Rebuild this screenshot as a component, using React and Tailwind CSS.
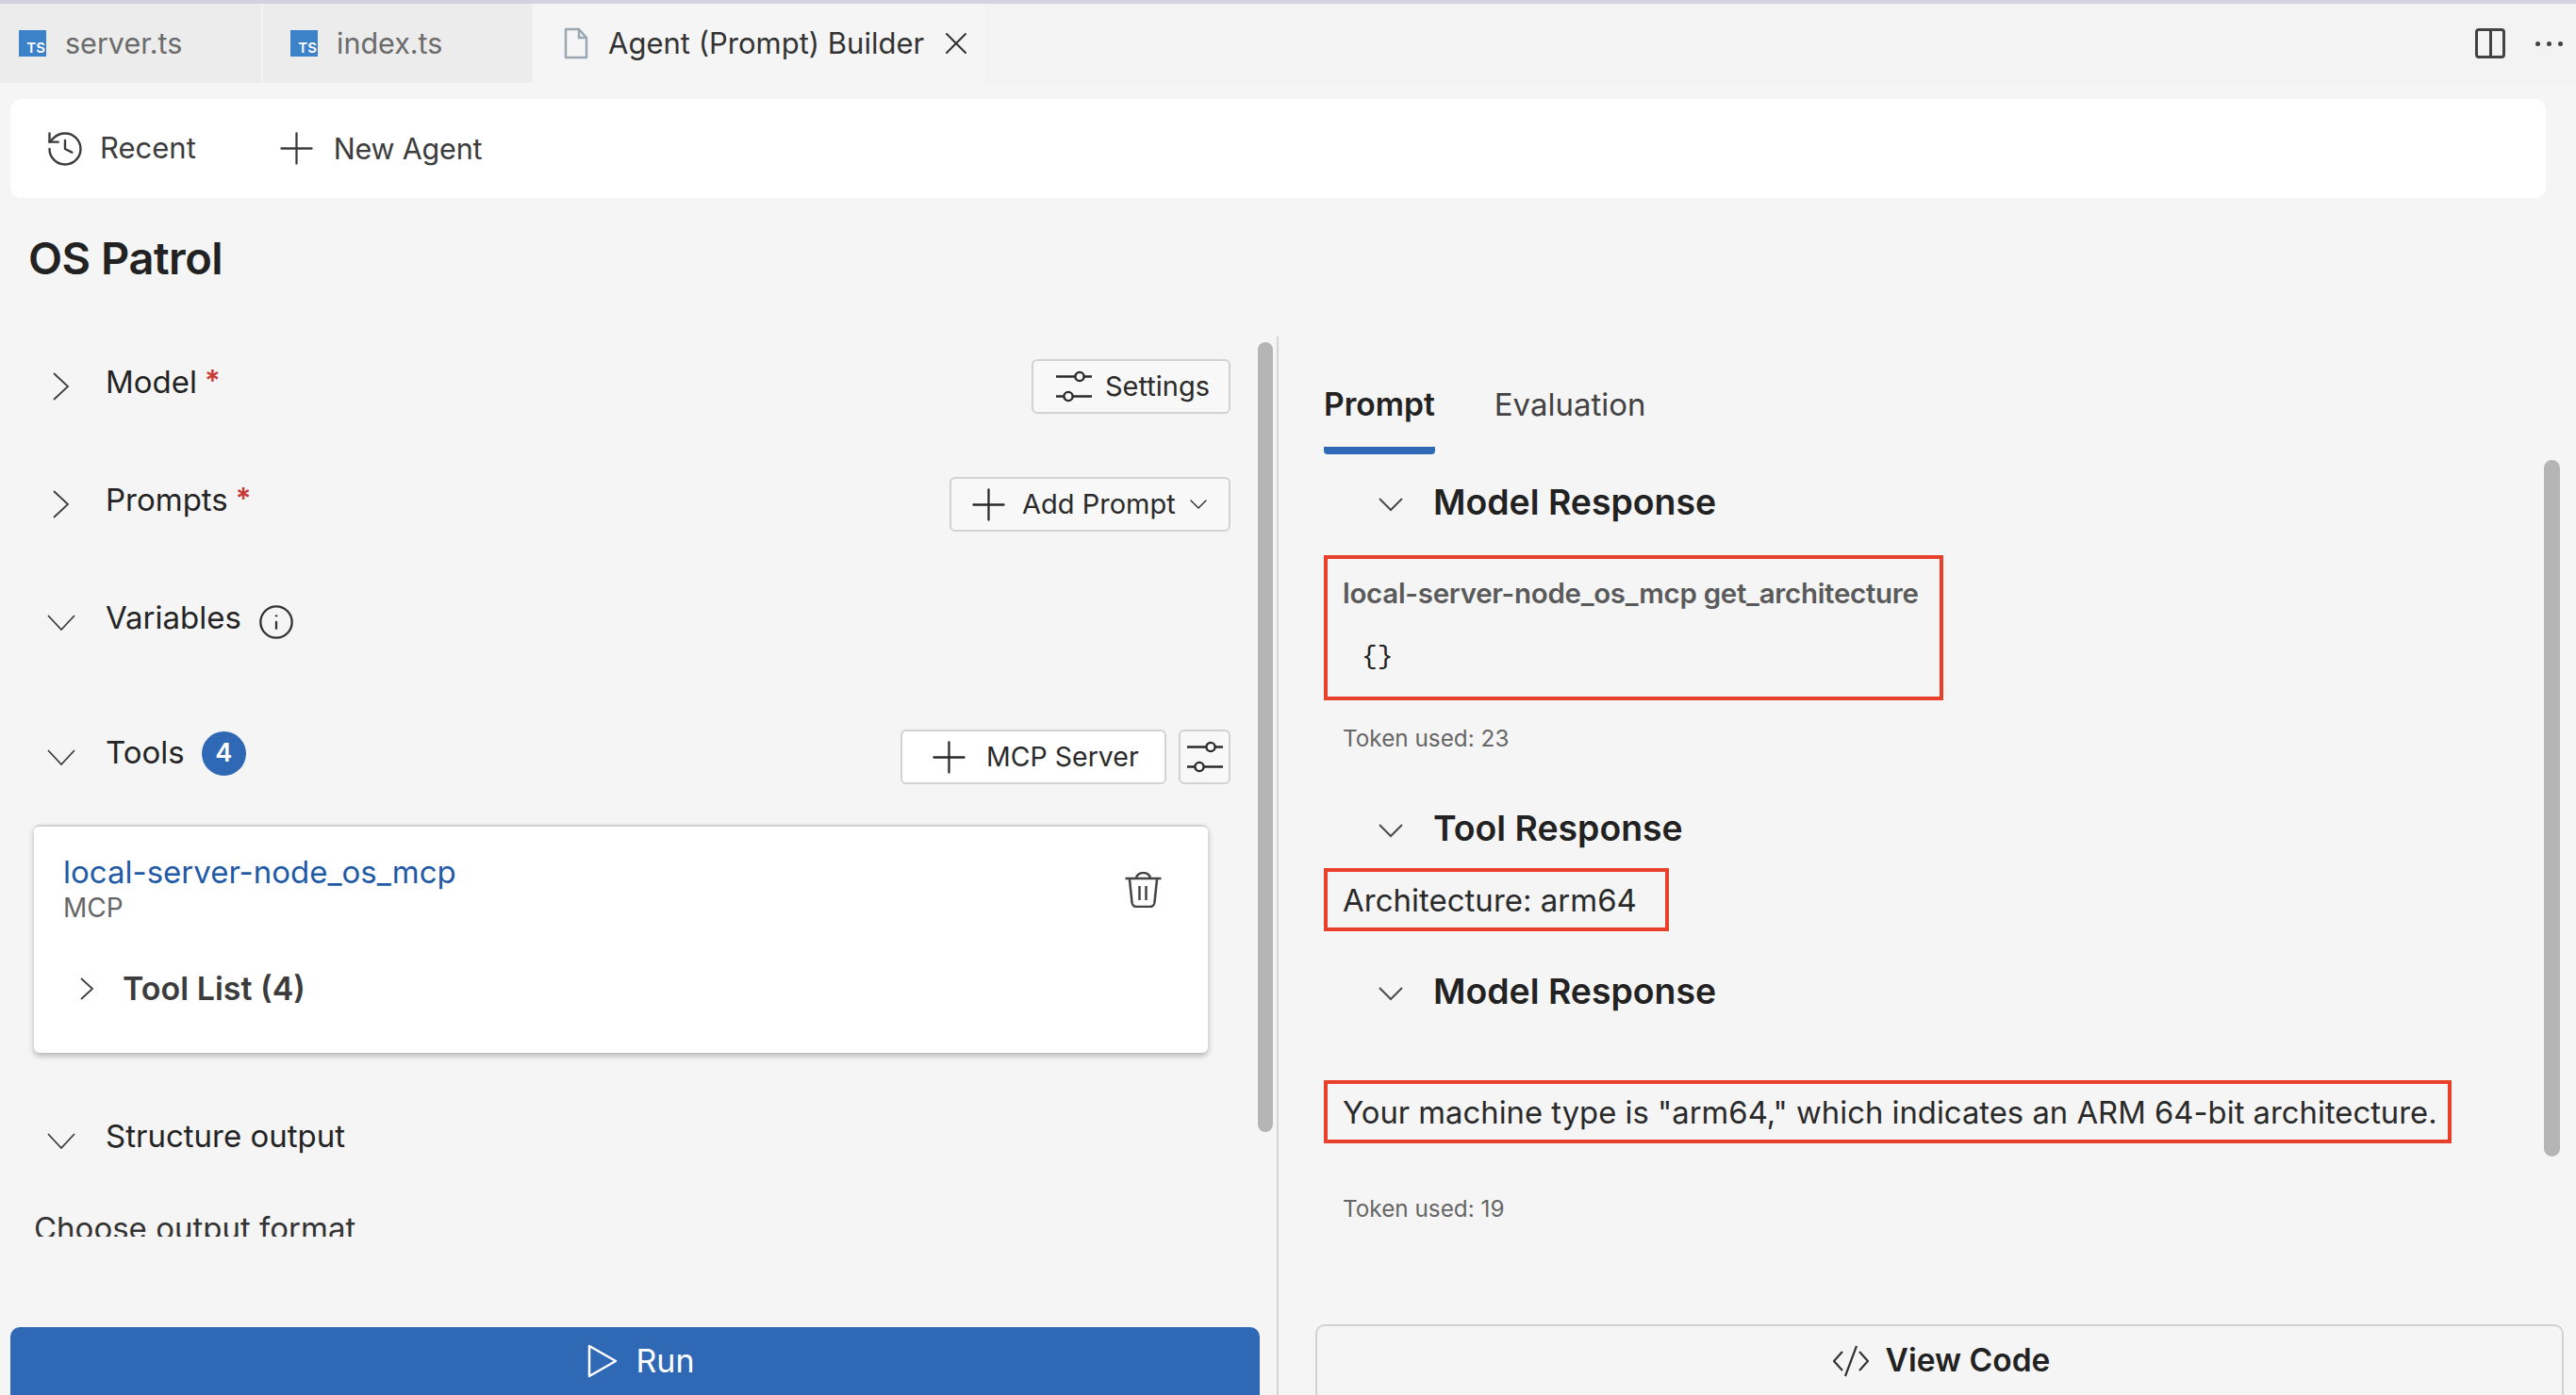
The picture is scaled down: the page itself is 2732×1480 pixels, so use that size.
import React from 'react';
import { History, Plus, X, ChevronDown, Info } from 'lucide-react';

const SlidersIcon = () => (
  <svg width="38" height="40" viewBox="0 0 38 40" fill="none" stroke="#2a2a2a" strokeWidth="2.4" className="shrink-0">
    <path d="M0 9.5h20M30 9.5h8" />
    <circle cx="25" cy="9.5" r="4.6" />
    <path d="M0 30.5h8M18 30.5h20" />
    <circle cx="13" cy="30.5" r="4.6" />
  </svg>
);

const TsIcon = () => (
  <div className="w-[29px] h-[28px] bg-[#3b82c9] flex items-end justify-end pr-[1px] pb-[2px] text-white text-[15px] leading-none font-semibold">TS</div>
);

const FileIcon = () => (
  <svg width="26" height="34" viewBox="0 0 26 34" fill="none" stroke="#9aa7b3" strokeWidth="2.5" className="shrink-0">
    <path d="M2 2h14l8 9v21H2z" strokeLinejoin="round" />
    <path d="M16 2v9h8" />
  </svg>
);

const TrashIcon = () => (
  <svg width="39" height="38" viewBox="0 0 39 38" fill="none" stroke="#444" strokeWidth="2.5">
    <path d="M0.5 7h38" />
    <path d="M12 7a7.5 6 0 0 1 15 0" />
    <path d="M5 8l2.5 24a5 5 0 0 0 5 5h14a5 5 0 0 0 5-5L34 8" />
    <path d="M15.5 15v15M22.5 15v15" />
  </svg>
);

const Chevron = ({ open }) => (
  <svg width="30" height="30" viewBox="0 0 30 30" fill="none" stroke="#3c3c3c" strokeWidth="1.8">
    {open ? <path d="M1 8l14 15 14-15" /> : <path d="M7 1l15 14-15 14" />}
  </svg>
);

const Star = () => <span className="text-[#c73a35] text-[31px] font-semibold leading-none self-start ml-2 mt-[7px]">*</span>;

const OutlineBtn = ({ className, children }) => (
  <div className={`h-[58px] flex items-center bg-[#f8f8f8] border-2 border-[#d2d2d2] rounded-[6px] text-[29px] text-[#2a2a2a] ${className}`}>
    {children}
  </div>
);

const Section = ({ open, label, after, right, className }) => (
  <div className={`h-[58px] flex items-center pl-[50px] pr-[49px] ${className}`}>
    <div className="w-[62px]"><Chevron open={open} /></div>
    <span className="text-[33px] text-[#242424] -translate-y-1">{label}</span>
    {after}
    <div className="ml-auto flex gap-[13px]">{right}</div>
  </div>
);

const Heading = ({ label, className }) => (
  <div className={`flex items-center ml-[58px] ${className}`}>
    <svg width="26" height="26" viewBox="0 0 26 26" fill="none" stroke="#4a4a4a" strokeWidth="2"><path d="M1 7l12 12 12-12" /></svg>
    <span className="text-[37.4px] leading-[56px] font-semibold text-[#222] ml-[32px] -translate-y-[2px]">{label}</span>
  </div>
);

const App = () => {
  return (
    <div className="w-[2732px] h-[1480px] overflow-hidden flex flex-col bg-[#f5f5f5] relative font-['Inter',sans-serif]">
      <div className="h-1 bg-[#d6d0e0]" />
      <div className="h-[84px] flex items-stretch bg-[#f3f3f3] text-[30.5px]">
        <div className="w-[277px] bg-[#ececec] mr-[2px] flex items-center pl-[20px] gap-[20px] text-[#6b6b6b]"><TsIcon />server.ts</div>
        <div className="w-[286px] bg-[#ececec] flex items-center pl-[29px] gap-[20px] text-[#6b6b6b]"><TsIcon />index.ts</div>
        <div className="w-[480px] bg-[#f5f5f5] flex items-center pl-[33px] gap-[21px] text-[#333] text-[31px]">
          <FileIcon />
          Agent (Prompt) Builder
          <X size={40} strokeWidth={1.2} className="-ml-[7px]" />
        </div>
        <div className="ml-auto flex items-center pr-[14px] gap-[32px]">
          <div className="w-8 h-8 border-[3px] border-[#424242] rounded-[4px] flex justify-center"><div className="w-[3px] bg-[#424242]" /></div>
          <div className="flex gap-[7px]">
            <div className="w-[5px] h-[5px] rounded-full bg-[#424242]" />
            <div className="w-[5px] h-[5px] rounded-full bg-[#424242]" />
            <div className="w-[5px] h-[5px] rounded-full bg-[#424242]" />
          </div>
        </div>
      </div>

      <div className="mt-[17px] ml-[11px] mr-[32px] h-[105px] bg-white rounded-xl flex items-center pl-[36px] text-[31px] text-[#3c3c3c]">
        <History size={44} strokeWidth={1.3} />
        <span className="ml-[15px]">Recent</span>
        <Plus size={55} strokeWidth={1} className="ml-[79px]" />
        <span className="ml-[12px] text-[30.5px] tracking-[-0.2px]">New Agent</span>
      </div>

      <div className="h-[147px] flex items-start pl-[30px] pt-[40px]">
        <h1 className="text-[47px] font-semibold text-[#222] leading-[48px] tracking-[-0.5px]">OS Patrol</h1>
      </div>

      <div className="flex-1 min-h-0 flex">
        <div className="w-[1356px] border-r-2 border-[#d4d4d4] flex flex-col">
          <div className="h-[955px] overflow-hidden">
            <Section className="mt-[24px]" label="Model" after={<Star />} right={
              <OutlineBtn className="w-[211px] pl-[24px] gap-[14px]"><SlidersIcon />Settings</OutlineBtn>
            } />
            <Section className="mt-[67px]" label="Prompts" after={<Star />} right={
              <OutlineBtn className="w-[298px] pl-[12px] gap-[8px]">
                <Plus size={55} strokeWidth={1} className="shrink-0" />
                Add Prompt
                <ChevronDown size={32} strokeWidth={1} className="shrink-0" />
              </OutlineBtn>
            } />
            <Section className="mt-[67px]" open label="Variables" after={<Info size={40} strokeWidth={1.4} className="ml-[17px] text-[#333]" />} />
            <Section className="mt-[85px]" open label="Tools" after={
              <span className="ml-[18px] w-[47px] h-[47px] rounded-full bg-[#2f69b5] text-white font-semibold text-[27px] flex items-center justify-center -translate-y-1">4</span>
            } right={
              <>
                <div className="h-[58px] w-[282px] flex items-center pl-[22px] gap-[12px] bg-white border-2 border-[#d2d2d2] rounded-[6px] text-[28.5px] text-[#2a2a2a]">
                  <Plus size={55} strokeWidth={1} className="shrink-0" />MCP Server
                </div>
                <OutlineBtn className="w-[55px] justify-center"><SlidersIcon /></OutlineBtn>
              </>
            } />

            <div className="mt-[43px] ml-[36px] w-[1245px] h-[242px] bg-white border-t-2 border-[#d2d2d2] rounded-[6px] shadow-[0_3px_6px_rgba(0,0,0,0.28)] flex justify-between pl-[31px] pr-[49px] pt-[26px]">
              <div>
                <div className="text-[33px] leading-[44px] text-[#1f5aa6]">local-server-node_os_mcp</div>
                <div className="text-[28px] leading-[32px] text-[#666]">MCP</div>
                <div className="flex items-center mt-[45px] ml-[13px]">
                  <svg width="24" height="24" viewBox="0 0 24 24" fill="none" stroke="#3c3c3c" strokeWidth="1.8"><path d="M6 1l12 11-12 11" /></svg>
                  <span className="text-[34px] leading-[50px] font-semibold text-[#3c3c3c] ml-[26px]">Tool List (4)</span>
                </div>
              </div>
              <div className="pt-[22px]"><TrashIcon /></div>
            </div>

            <Section className="mt-[64px]" open label="Structure output" />
            <div className="mt-[42px] pl-[36px] text-[33px] leading-[44px] text-[#333]">Choose output format</div>
          </div>
          <div className="mt-auto ml-[11px] mr-[18px] h-[72px] rounded-t-[10px] bg-[#2f69b5] flex items-center justify-center pl-[12px] gap-[18px] text-[34px] text-white">
            <svg width="34" height="36" viewBox="0 0 34 36" fill="none" stroke="white" strokeWidth="2.5" strokeLinejoin="round"><path d="M3 2l28 16L3 34z" /></svg>
            <span className="-translate-y-[1px]">Run</span>
          </div>
        </div>

        <div className="flex-1 min-w-0 flex flex-col pl-[48px]">
          <div className="flex gap-[63px] mt-[50px] text-[33.6px] h-[75px]">
            <div className="font-semibold text-[#222] border-b-[8px] border-[#2f69b5] rounded-b-[4px] h-[75px] leading-[44px]">Prompt</div>
            <div className="text-[#424242] text-[33px] leading-[44px]">Evaluation</div>
          </div>
          <Heading className="mt-[25px]" label="Model Response" />
          <div className="mt-[26px] w-[657px] h-[154px] border-4 border-[#e8402a] pl-[16px] pt-[18px]">
            <div className="text-[29.5px] leading-[36px] font-semibold tracking-[-0.3px] text-[#5a5a5a] whitespace-nowrap">local-server-node_os_mcp get_architecture</div>
            <div className="mt-[32px] ml-[20px] text-[28px] leading-[36px] text-[#222] font-['Liberation_Mono',monospace]">{'{}'}</div>
          </div>
          <div className="mt-[25px] ml-[20px] text-[24.3px] leading-[30px] text-[#666]">Token used: 23</div>
          <Heading className="mt-[55px]" label="Tool Response" />
          <div className="mt-[12px] w-[366px] h-[67px] border-4 border-[#e8402a] pl-[16px] pt-[3px] flex items-center text-[33px] text-[#2a2a2a]">Architecture: arm64</div>
          <Heading className="mt-[38px]" label="Model Response" />
          <div className="mt-[64px] w-[1196px] h-[67px] border-4 border-[#e8402a] pl-[16px] pt-[2px] flex items-center text-[32.8px] text-[#2a2a2a] whitespace-nowrap">Your machine type is "arm64," which indicates an ARM 64-bit architecture.</div>
          <div className="mt-[54px] ml-[20px] text-[24.3px] leading-[30px] text-[#666]">Token used: 19</div>
          <div className="mt-auto -ml-[9px] mr-[13px] h-[75px] border-2 border-b-0 border-[#d2d2d2] rounded-t-[10px] flex items-center justify-center pl-1 gap-[18px] text-[33.5px] font-semibold text-[#222]">
            <svg width="38" height="34" viewBox="0 0 38 34" fill="none" stroke="#333" strokeWidth="2.2"><path d="M10 7l-9 10 9 10M28 7l9 10-9 10M25 1L13 33" /></svg>
            View Code
          </div>
        </div>
      </div>

      {/* overlay scrollbars */}
      <div className="absolute left-[1334px] top-[363px] w-[16px] h-[838px] rounded-full bg-[#b5b5b5]" />
      <div className="absolute left-[2698px] top-[488px] w-[17px] h-[739px] rounded-full bg-[#b5b5b5]" />
    </div>
  );
};

export default App;
